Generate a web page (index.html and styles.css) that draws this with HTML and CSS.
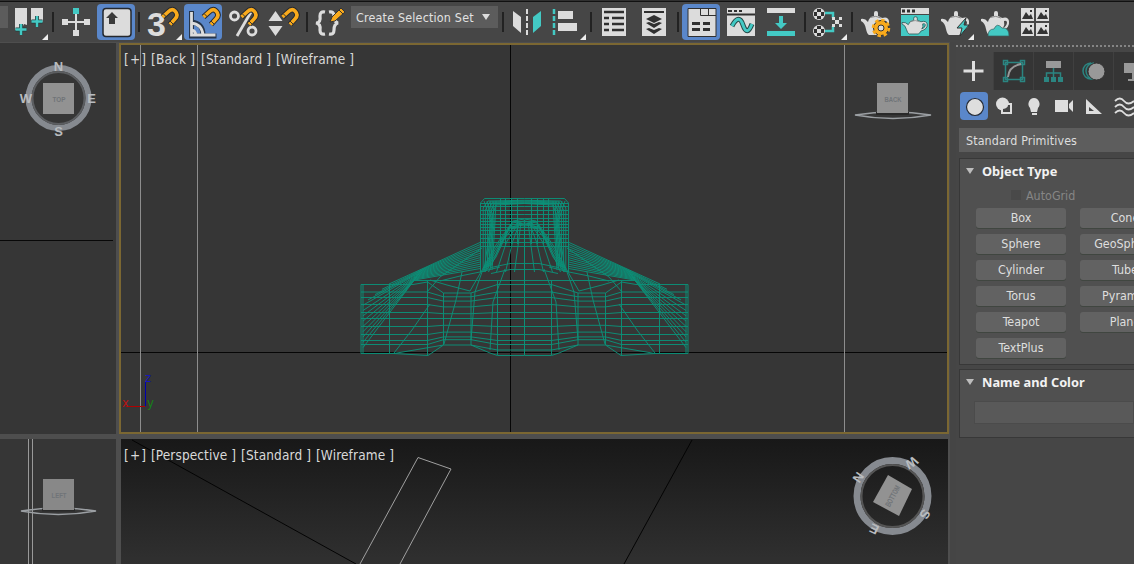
FILE: index.html
```html
<!DOCTYPE html>
<html lang="en">
<head>
<meta charset="utf-8">
<title>Modeling workspace</title>
<link rel="stylesheet" href="styles.css">
</head>
<body>
<svg width="0" height="0" class="defs">
  <defs>
    <g id="magnet"><path d="M-8.500 -3L-3 -8Q1 -12 4 -9Q8 -5 4 -1L-1 4.500" fill="none" stroke="#26292e" stroke-width="5.500"/><path d="M-8.500 -3L-3 -8Q1 -12 4 -9Q8 -5 4 -1L-1 4.500" fill="none" stroke="#f9aa1c" stroke-width="3.600"/><path d="M-7.500 -6l3 3M2 4l-3-3" stroke="#333" stroke-width="1"/></g>
    <g id="pot"><path d="M0 9Q4 8 7 12Q8 7 13 6V3Q13 1 15 1Q17 1 17 3V6Q20 7 21 8Q27 6 28 11Q29 18 21 21Q20 24 18 25H8Q6 24 5 19Q4 13 0 11ZM23 11Q24 15 22 18Q26 16 26 12Q25 10 23 11Z" fill="#dcdcdc" fill-rule="evenodd"/><path d="M9 7.500Q15 5 20 8" stroke="#888" fill="none"/></g>
    <g id="photo"><path d="M0 0h13v13H0z" fill="#dcdcdc"/><path d="M1 11L5 4L8 8L10 6L12 11ZM9 2h2v2H9z" fill="#333"/></g>
    <g id="checker"><circle r="6" fill="#dcdcdc"/><path d="M-2-5h4v3h-4zM-5-2h3v4h-3zM2-2h3v4H2zM-2 2h4v3h-4z" fill="#303030"/></g>
  </defs>
</svg>
<div class="app">
  <div class="toolbar">
    <svg class="tool" width="50" viewBox="0 0 50 42"><path d="M0 6h8v22H0z" fill="#5c5c5c"/><path d="M15 8h12v17l-3-1-3 6-6 0zM31 8h12v14l-3-1-2-3-3 3-4-1z" fill="#dcdcdc"/><path d="M21 24v11M15.500 29.500h11M37 16v11M31.500 21.500h11" stroke="#263b3b" stroke-width="4"/><path d="M21 24v11M15.500 29.500h11M37 16v11M31.500 21.500h11" stroke="#43c9c4" stroke-width="2.500"/><path d="M48 34v6h-6z" fill="#eee"/></svg>
    <i class="sep"></i>
    <svg class="tool" width="41" viewBox="55 0 41 42"><path d="M66 22h20M76 12v20" stroke="#dcdcdc" stroke-width="2"/><path d="M62 19h6v6h-6zM84 19h6v6h-6zM73 30h6v6h-6z" fill="#dcdcdc"/><path d="M73 8h6v6h-6z" fill="#43c9c4"/></svg>
    <div class="active first"><svg width="38" height="36" viewBox="97 4 38 36"><rect x="103" y="8.500" width="28" height="28" rx="3" fill="#dcdcdc" stroke="#25282d" stroke-width="1.500"/><path d="M112 12l6 6h-3v6h-6v-6h-3z" fill="#3b3b3b"/></svg></div>
    <i class="sep gap"></i>
    <svg class="tool" width="42" viewBox="142 0 42 42"><text x="147" y="36" class="three">3</text><use href="#magnet" x="171" y="20"/><path d="M182 34v6h-6z" fill="#eee"/></svg>
    <div class="active"><svg width="38" height="36" viewBox="184 4 38 36"><path d="M191.500 11v25h25M191 22q12 1 12 13" stroke="#26354a" stroke-width="5" fill="none"/><path d="M191.500 12v23h24M191 23q11 1 12 12M191 30q4 0 5 5" stroke="#dcdcdc" stroke-width="2.800" fill="none"/><use href="#magnet" x="212" y="20"/></svg></div>
    <svg class="tool" width="40" viewBox="222 0 40 42"><circle cx="234.500" cy="16" r="4" fill="none" stroke="#dcdcdc" stroke-width="2.800"/><circle cx="252" cy="31" r="4" fill="none" stroke="#dcdcdc" stroke-width="2.800"/><path d="M251 12L237 36" stroke="#dcdcdc" stroke-width="2.800"/><use href="#magnet" x="250" y="20"/></svg>
    <svg class="tool" width="42" viewBox="262 0 42 42"><path d="M275.500 11l7 10h-14zM275.500 36l7-10h-14z" fill="#dcdcdc"/><use href="#magnet" x="291" y="20"/></svg>
    <i class="sep"></i>
    <svg class="tool" width="41" viewBox="309 0 41 42"><path d="M325 12Q320 11 320 16Q321 23 316 23Q321 24 320 30Q320 35 325 34M329 12Q334 11 334 16Q334 22 338 23Q334 24 334 30Q334 35 329 34" fill="none" stroke="#dcdcdc" stroke-width="3.200"/><path d="M330 22l2-5L341 8l4 4L335 21z" fill="#f9aa1c" stroke="#333"/><path d="M339 10l4 4" stroke="#333"/></svg>
    <div class="dropdown"><span>Create Selection Set</span><i></i></div>
    <i class="sep gap2"></i>
    <svg class="tool" width="42" viewBox="506 0 42 42"><path d="M513 11l8 6v16l-8-7z" fill="#dcdcdc"/><path d="M541 11l-8 6v16l8-7z" fill="#43c9c4"/><path d="M527 9v27" stroke="#dcdcdc" stroke-width="2" stroke-dasharray="5 2"/></svg>
    <svg class="tool" width="40" viewBox="548 0 40 42"><path d="M554 9v27" stroke="#43c9c4" stroke-width="2.500" stroke-dasharray="5 2"/><path d="M558 11h15v8h-15zM558 23h19v8h-19z" fill="#dcdcdc"/><path d="M586 34v6h-6z" fill="#eee"/></svg>
    <i class="sep"></i>
    <svg class="tool" width="39" viewBox="593 0 39 42"><path d="M602 8h24v28h-24z" fill="#dcdcdc"/><path d="M604 12h20M604 18h5m3 0h12M604 24h5m3 0h12M604 30h5m3 0h12" stroke="#303030" stroke-width="2.500"/></svg>
    <svg class="tool" width="43" viewBox="632 0 43 42"><path d="M642 8h24v28h-24z" fill="#dcdcdc"/><path d="M644 12h20" stroke="#303030" stroke-width="2"/><path d="M654 15l8 4-8 4-8-4zM646 23l3-1 5 2 5-2 3 1-8 5zM646 29l3-1 5 2 5-2 3 1-8 5z" fill="#303030"/></svg>
    <i class="sep"></i>
    <div class="active late"><svg width="38" height="36" viewBox="682 4 38 36"><path d="M688 8.500h28v28h-28z" fill="#dcdcdc" stroke="#303030"/><path d="M700.500 9v6.500H716M708.500 9v6.500" fill="none" stroke="#303030"/><path d="M692 23.500h8m3 0h7M692 29.500h8m3 0h7" stroke="#303030" stroke-width="3"/></svg></div>
    <svg class="tool" width="39" viewBox="721 0 39 42"><path d="M727 8h28v28h-28z" fill="#dcdcdc"/><path d="M727 14.500h28M728 11h4m2 0h3m2 0h3" stroke="#303030" stroke-width="2"/><path d="M732 26q7-13 11-1t9-1" fill="none" stroke="#244746" stroke-width="5"/><path d="M732 26q7-13 11-1t9-1" fill="none" stroke="#43c9c4" stroke-width="3"/></svg>
    <svg class="tool" width="42" viewBox="760 0 42 42"><path d="M767 8h28v5h-28z" fill="#dcdcdc"/><path d="M767 31h28v5h-28zM779 16h4v7h4l-6 6-6-6h4z" fill="#43c9c4"/></svg>
    <i class="sep"></i>
    <svg class="tool" width="42" viewBox="807 0 42 42"><path d="M825 13h8v5M825 31h8v-5" stroke="#43c9c4" stroke-width="2.500" fill="none"/><use href="#checker" x="819" y="14"/><use href="#checker" x="819" y="31"/><path d="M832 17h3v3h4v-3h3v3h-3v4h3v3h-3v-3h-4v3h-3v-3h3v-4h-3z" fill="#dcdcdc"/><path d="M847 34v6h-6z" fill="#eee"/></svg>
    <i class="sep"></i>
    <svg class="tool" width="42" viewBox="854 0 42 42"><use href="#pot" x="861" y="10"/><circle cx="881" cy="28" r="7.500" fill="#f9aa1c" stroke="#333" stroke-width="1"/><circle cx="881" cy="28" r="8" fill="none" stroke="#f9aa1c" stroke-width="2.500" stroke-dasharray="3.500 2.780"/><circle cx="881" cy="28" r="3" fill="#dcdcdc" stroke="#333"/></svg>
    <svg class="tool" width="40" viewBox="896 0 40 42"><path d="M901 8h28v6h-28z" fill="#dcdcdc"/><path d="M902 11h3m2 0h3m2 0h3" stroke="#303030" stroke-width="3"/><path d="M901 15h28v21h-28z" fill="#43c9c4"/><g transform="translate(902 16) scale(.9 .72)" stroke="#275958"><use href="#pot"/></g></svg>
    <svg class="tool" width="40" viewBox="936 0 40 42"><use href="#pot" x="941" y="10"/><path d="M966 18l-9 10h5l-2 8 9-11h-5z" fill="#43c9c4" stroke="#333"/><path d="M974 34v6h-6z" fill="#eee"/></svg>
    <svg class="tool" width="40" viewBox="976 0 40 42"><use href="#pot" x="981" y="10"/><path d="M988 36q0-7 6-7 3-7 8-1 7-1 7 8z" fill="#43c9c4" stroke="#36605e" stroke-width=".7"/></svg>
    <svg class="tool" width="40" viewBox="1016 0 40 42"><use href="#photo" x="1021" y="8"/><use href="#photo" x="1036" y="8"/><use href="#photo" x="1021" y="23"/><use href="#photo" x="1036" y="23"/></svg>
  </div>
  <div class="workspace">
    <div class="views">
      <div class="view">
        <svg width="116" height="391" viewBox="0 43 116 391"><path d="M0 240.500h113" stroke="#080808"/><circle cx="58.500" cy="98" r="30" fill="none" stroke="#868a90" stroke-width="6"/><circle cx="58.500" cy="98" r="26" fill="none" stroke="#5c5e61" stroke-width="2"/><path d="M43 83h31v31H43z" fill="#929292"/><g class="compass"><text x="58.500" y="71">N</text><text x="26" y="103">W</text><text x="91.500" y="103">E</text><text x="58.500" y="136">S</text></g><text x="59" y="102" class="cube" textLength="13" lengthAdjust="spacingAndGlyphs">TOP</text></svg>
      </div>
      <div class="view selected">
        <svg width="830" height="391" viewBox="119 43 830 391"><path d="M510.500 45V432M121 352.500H947" stroke="#060606"/><path d="M140.500 45V432M197.500 45V432M844.500 45V432" stroke="#8d8d8d"/>
          <g id="mesh"></g>
          <g class="label"><text x="124" y="64" textLength="22">[+]</text><text x="151" y="64" textLength="44">[Back ]</text><text x="201" y="64" textLength="70">[Standard ]</text><text x="276" y="64" textLength="78">[Wireframe ]</text></g>
          <path d="M145.500 406V382" stroke="#0000b0"/><path d="M145 406.500H126" stroke="#b00000"/><g class="axis"><text x="145" y="382" fill="#1515bd">z</text><text x="122" y="407" fill="#b81414">x</text><text x="147" y="407" fill="#188018">y</text></g>
          <path d="M855 115q38-6 76 0q-38 7-76 0z" fill="none" stroke="#9b9fa3" stroke-width="1.500"/><path d="M876 113.500h33" stroke="#292929" stroke-width="3"/><path d="M877 83h31v30h-31z" fill="#929292"/><text x="893" y="102" class="cube" textLength="17" lengthAdjust="spacingAndGlyphs">BACK</text></svg>
      </div>
      <div class="view">
        <svg width="116" height="125" viewBox="0 439 116 125"><path d="M28.500 439v125M32.500 439v125" stroke="#999"/><path d="M21 511q38-6 75 0q-38 7-75 0z" fill="none" stroke="#9b9fa3" stroke-width="1.500"/><path d="M42 510h33" stroke="#292929" stroke-width="3"/><path d="M43 479h31v31H43z" fill="#888"/><text x="59" y="498" class="cube" textLength="15" lengthAdjust="spacingAndGlyphs">LEFT</text></svg>
      </div>
      <div class="view perspective">
        <svg width="830" height="125" viewBox="119 439 830 125"><path d="M132 440L356 564M692 440L624 564" stroke="#040404"/><path d="M360 564L418 457.500L451 469L400 564" fill="none" stroke="#a0a0a0"/>
          <g class="label"><text x="124" y="460" textLength="22">[+]</text><text x="151" y="460" textLength="85">[Perspective ]</text><text x="241" y="460" textLength="70">[Standard ]</text><text x="316" y="460" textLength="78">[Wireframe ]</text></g>
          <circle cx="892.500" cy="496" r="35.500" fill="none" stroke="#868a90" stroke-width="7"/><circle cx="892.500" cy="496" r="31" fill="none" stroke="#555" stroke-width="2"/><path d="M888 475L912 489L899 516L873 502z" fill="#929292"/><g transform="translate(892.500 496) rotate(-62)"><text y="3" class="cube" textLength="23" lengthAdjust="spacingAndGlyphs">BOTTOM</text></g><g class="compass"><text transform="translate(862 480) rotate(-55)">N</text><text transform="translate(909 459) rotate(145)">W</text><text transform="translate(921 512) rotate(120)">S</text><text transform="translate(876 525) rotate(205)">E</text></g></svg>
      </div>
    </div>
    <aside class="panel">
      <div class="grip"></div>
      <div class="tabs">
        <svg width="37" height="38" viewBox="956 52 37 38"><path d="M973.500 61v20M963.500 71h20" stroke="#dedede" stroke-width="3"/></svg>
        <svg width="39" height="38" viewBox="994 52 39 38"><path d="M1005.500 62.500h17v17h-17zM1003.500 60.500h4v4h-4zM1020.500 60.500h4v4h-4zM1003.500 77.500h4v4h-4zM1020.500 77.500h4v4h-4z" fill="#333" stroke="#2b8581" stroke-width="1.500"/><path d="M1008 77q1-11 13-13" fill="none" stroke="#999" stroke-width="2"/></svg>
        <svg width="39" height="38" viewBox="1034 52 39 38"><path d="M1046 61h15v7h-15z" fill="#999"/><path d="M1053.500 68v9M1046.500 78v-5h14v5" fill="none" stroke="#2b8581" stroke-width="1.500"/><path d="M1044 77h5v5h-5zM1051 77h5v5h-5zM1058 77h5v5h-5z" fill="#2b8581"/></svg>
        <svg width="39" height="38" viewBox="1074 52 39 38"><path d="M1091 63a8 8 0 1 0 0 16M1094 63a8 8 0 1 0 0 16" fill="none" stroke="#2b8581" stroke-width="1.500"/><circle cx="1096.500" cy="71.500" r="8.500" fill="#999" stroke="#333"/></svg>
        <svg width="20" height="38" viewBox="1114 52 20 38"><path d="M1124 63h10v10h-10zM1128 79h6v2h-6zM1132 73h2v8h-2z" fill="#999"/></svg>
      </div>
      <div class="categories">
        <div class="chosen"><svg width="28" height="28" viewBox="0 0 28 28"><circle cx="15" cy="15" r="8.500" fill="#dedede" stroke="#252b35" stroke-width="1.200"/></svg></div>
        <svg width="146" height="28" viewBox="988 92 146 28" fill="#dedede"><circle cx="1002.500" cy="104" r="6.500"/><path d="M1002 104h9v9h-9z" fill="#464646" stroke="#dedede" stroke-width="2"/><path d="M1003 105h5q0 3-5 4z"/><path d="M1034 98a6 6 0 0 0-4 10l1 4h6l1-4a6 6 0 0 0-4-10zM1032 113h5v2h-5zM1055 100h13v12h-13zM1069 104l4-4v12l-4-4z"/><path d="M1086 99v15h16zM1089 107v4h5z" fill-rule="evenodd"/><path d="M1115 101q5-5 9 0t10 0M1115 107q5-5 9 0t10 0M1115 113q5-5 9 0t10 0" fill="none" stroke="#dedede" stroke-width="1.800"/></svg>
      </div>
      <div class="select">Standard Primitives</div>
      <section class="rollout object">
        <h2>Object Type</h2>
        <div class="autogrid"><i></i>AutoGrid</div>
        <div class="buttons"><b>Box</b><b>Cone</b><b>Sphere</b><b>GeoSphere</b><b>Cylinder</b><b>Tube</b><b>Torus</b><b>Pyramid</b><b>Teapot</b><b>Plane</b><b>TextPlus</b></div>
      </section>
      <section class="rollout naming"><h2>Name and Color</h2><div class="field"></div></section>
    </aside>
  </div>
</div>
<script src="mesh.js"></script>
</body>
</html>
```
FILE: styles.css
```css
* { box-sizing: border-box; }
body { margin: 0; background: #454545; font-family: "DejaVu Sans Condensed", "DejaVu Sans", sans-serif; font-stretch: condensed; overflow: hidden; }
svg { display: block; flex: none; }
.defs { position: absolute; }
.app { width: 1134px; height: 564px; overflow: hidden; display: flex; flex-direction: column; }
.toolbar { height: 42px; flex: none; display: flex; background: #464646; border-top: 1px solid #303030; box-shadow: inset 0 1px #111; }
.tool { height: 42px; margin-top: -1px; }
.sep { width: 2px; height: 20px; margin: 11px 1.5px 0; background: #222; flex: none; }
.sep.gap { margin-left: 3px; margin-right: 2px; }
.sep.gap2 { margin-left: 4px; margin-right: 2px; }
.active { width: 38px; height: 36px; margin-top: 3px; flex: none; border-radius: 4px; background: #5a87ca; }
.active.first { margin-left: 1px; }
.active.late { margin-left: 2px; margin-right: 1px; }
.three { font: bold 34px "Liberation Sans", sans-serif; fill: #dcdcdc; }
.dropdown { width: 147px; height: 22px; margin: 5px 0 0 1px; padding: 0 8px 0 5px; background: #5c5c5c; color: #e1e1e1; display: flex; align-items: center; justify-content: space-between; font-size: 12.4px; letter-spacing: .2px; white-space: nowrap; flex: none; }
.dropdown i { border: 4px solid transparent; border-top: 6px solid #ddd; border-bottom: 0; }
.workspace { display: flex; height: 522px; }
.views { width: 950px; flex: none; padding-top: 1px; display: grid; grid-template: 391px 125px / 116px 830px; gap: 5px 3px; background: #4e4e4e; }
.view { background: #363636; overflow: hidden; }
.selected { outline: 2px solid #7b6732; outline-offset: -2px; }
.perspective { background: linear-gradient(#181818, #303030); margin-left: 2px; width: 827px; }
.perspective svg { margin-left: -2px; }
.label { font-size: 13.5px; fill: #d9d9d9; }
.compass { font: bold 13px "Liberation Sans", sans-serif; fill: #b9bcbf; text-anchor: middle; }
.cube { font: bold 8px "Liberation Sans", sans-serif; fill: #707478; text-anchor: middle; }
.axis { font-size: 13px; }
.mesh { fill: none; stroke: #0c9078; stroke-width: .95; }
.panel { width: 178px; margin-left: 6px; flex: none; overflow: hidden; background: #464646; }
.grip { height: 5px; margin-top: 0; border-bottom: 2px dotted #858585; }
.tabs { margin-top: 5px; height: 38px; display: flex; gap: 1px; background: #404040; }
.tabs svg { background: #353535; }
.tabs svg:first-child { background: #464646; }
.categories { display: flex; height: 32px; padding: 2px 0 0 4px; }
.chosen { width: 28px; height: 28px; flex: none; border-radius: 4px; background: #5a87ca; }
.select { height: 24px; margin: 6px 0 0 3px; padding-left: 7px; background: #5d5d5d; color: #dedede; font-size: 12.4px; letter-spacing: .1px; line-height: 25px; }
.rollout { margin-left: 3px; background: #505050; border: 1px solid #383838; border-right: 0; }
.object { height: 207px; margin-top: 6px; }
.naming { height: 69px; margin-top: 4px; }
.rollout h2 { margin: 0; height: 23px; display: flex; align-items: center; color: #f2f2f2; font: bold 12.8px "Noto Sans", sans-serif; }
.rollout h2::before { content: ""; border: 4px solid transparent; border-top: 6px solid #bdbdbd; border-bottom: 0; margin: 0 8px 0 6px; }
.autogrid { display: flex; align-items: center; gap: 5px; padding-left: 51px; height: 20px; margin-top: 3px; color: #868686; font-size: 12.4px; }
.autogrid i { width: 10px; height: 10px; background: #494949; }
.buttons { margin: 3px 0 0 16px; display: grid; grid-template-columns: 90px 90px; grid-auto-rows: 20px; gap: 6px 14px; width: 194px; }
.buttons b { background: #626262; border-radius: 3px; box-shadow: 0 1px #404640; color: #dedede; text-align: center; font-weight: normal; font-size: 12.4px; line-height: 20px; }
.field { margin: 8px 0 0 14px; height: 23px; background: #595959; border: 1px solid #4b4b4b; }
```
FILE: mesh.js
```js
const parts = [];
function line(points) {
  parts.push('M' + points.map(p => p.join(' ')).join('L'));
}
const rows = [292, 297.5, 304.5, 312.5, 318.5, 326.5, 334.5, 340.5, 344.5];
// Base bands follow the stepped outline towards the centre.
rows.forEach((y, i) => {
  const inner = y + (4 - i) * 1.2;
  line([[361, y], [427.5, y], [443.5, inner], [471, inner], [497.5, y], [524.5, y]]);
});
line([[524.5, 280.5], [413, 280.5]]);
line([[361, 284.5], [413, 284.5], [427.5, 282], [443.5, 293], [471, 293], [497.5, 284.5], [524.5, 284.5]]);
line([[361, 284.5], [361, 353.5], [394, 353.5], [428, 355.5], [443.5, 345], [471, 345], [490, 353], [497.5, 355.5], [524.5, 355.5]]);
line([[394, 353.5], [443.5, 345]]);
line([[471, 345], [497.5, 350], [524.5, 350]]);
[[363, 285, 353], [389.5, 284, 353], [427.5, 281, 355], [443.5, 293, 345], [471, 293, 345], [497.5, 281, 355], [524.5, 220, 355]].forEach(v => line([[v[0], v[1]], [v[0], v[2]]]));
// Fan joining the hub and outer rim.
for (let i = 0; i < 13; i++) {
  line([[481, 242 + i * 2.2], [424 - i * .8, 268 + i], [363 + Math.max(0, 26 - i * 7), 284 + i * 5.3]]);
}
line([[430, 304], [412, 330], [394, 353]]);
line([[462, 272], [456, 300], [444, 344]]);
line([[482, 272], [475, 292], [471, 340]]);
line([[505, 269], [493, 302], [490, 350]]);
line([[482, 248], [440, 277], [427, 292]]);
line([[481, 272], [470, 291], [447, 285], [430, 280]]);
// Rounded upper hub with inset rings.
line([[480.5, 272], [480.5, 203], [484.5, 198.5], [524.5, 198.5]]);
for (let i = 1; i < 6; i++) {
  line([[481 + i * 2.2, 270 - i], [481 + i * 2.2, 206 + i * 2], [486 + i * 2, 200 + i], [524.5, 199.5 + i * .8]]);
}
[203.5, 206.5, 210.5, 214.5, 218.5, 221.5, 224.5, 227.5, 230.5, 234.5, 238.5, 242.5, 246.5].forEach(y => line([[481, y], [524.5, y]]));
[263.5, 269.5].forEach(y => line([[491, y + 4], [510, y], [524.5, y]]));
[500.5, 505.5, 511.5, 517.5].forEach((x, i) => {
  line([[x, 199], [x, 244]]);
  line([[518 + i, 222], [x + 1, 242], [x - (4 - i) * 3, 272]]);
});
for (let i = 0; i < 5; i++) {
  line([[484 + i * 3, 201], [491 + i, 222], [484 + i * 2, 270]]);
  line([[524.5, 219 + i * 2], [513 - i, 221 + i * 2], [496, 245 + i * 3], [481 + i, 272]]);
}
line([[500, 267], [480, 272], [460, 276], [440, 281]]);
const d = parts.join('');
document.getElementById('mesh').innerHTML =
  `<path class="mesh" d="${d}"/><path class="mesh" transform="translate(1049 0) scale(-1 1)" d="${d}"/>`;
```
